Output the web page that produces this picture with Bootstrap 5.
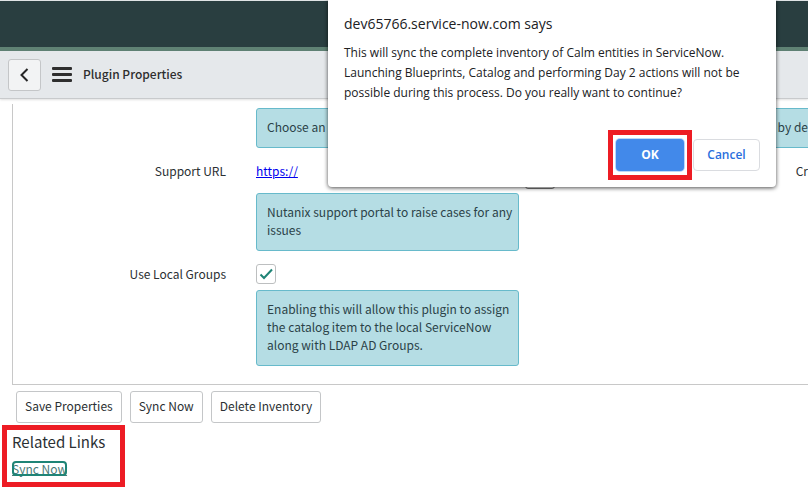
<!DOCTYPE html>
<html lang="en">
<head>
<meta charset="utf-8">
<meta name="viewport" content="width=device-width, initial-scale=1">
<title>Plugin Properties</title>
<link rel="stylesheet" href="https://cdn.jsdelivr.net/npm/bootstrap@5.3.0/dist/css/bootstrap.min.css">
<style>
  body { font-family: "Noto Sans CJK SC", "Open Sans", sans-serif; font-size: 12px; line-height: 18px; color: #2b3033; background: #fff; overflow-x: hidden; }
  .top-banner { height: 51px; background: #293e40; border-top: 1px solid #dfe3e5; border-bottom: 4px solid #5f8274; }
  .page-head { height: 48px; padding-left: 8px; background: #e5e8eb; border-bottom: 1px solid #c8cacc; box-shadow: 0 1px 2px rgba(0,0,0,.12); }
  .page-title { font-size: 12px; line-height: 18px; font-weight: 500; color: #2e2e2e; margin-left: 11px; padding-bottom: 2px; }
  .back-btn { width: 33px; height: 32px; border: 1px solid #c4c6c8; border-radius: 3px; background: #f2f3f4; }
  .menu-btn { margin-left: 11px; }
  .form-panel { margin: 5px 0 0 12px; border-left: 1px solid #c8c8c8; border-bottom: 1px solid #c8c8c8; padding: 4px 0 18px; overflow: hidden; }
  .field-label { width: 213px; text-align: right; flex: none; margin-right: 30px; }
  .field-body { width: 263px; flex: none; }
  .hint { background: #b5dde4; border: 1px solid #67bacb; border-radius: 3px; padding: 9px 0 11px 10px; color: #2b4248; white-space: nowrap; }
  .hint-cut { border-right: 0; border-radius: 3px 0 0 3px; text-align: right; margin-left: 30px; }
  .url-link { color: #00e; text-decoration: underline; }
  .link-row { height: 45px; }
  .lookup-btn { width: 30px; height: 36px; margin-left: 6px; border: 1px solid #777; border-radius: 3px; background: #fff; }
  .check-row { height: 39px; padding-top: 7px; }
  .tick { appearance: none; display: block; width: 20px; height: 20px; margin: 0; border: 1px solid #bdbfc0; border-radius: 3px; background: #fff; }
  .tick-mark { pointer-events: none; }
  .action-row { padding: 6px 0 0 16px; }
  .action-btn { height: 32px; padding: 0 8px 2px; font-size: 12px; line-height: 18px; color: #2b3033; background: #fff; border: 1px solid #c4c6c8; border-radius: 3px; }
  .related { width: max-content; margin: 2px 0 0 2px; padding: 0 15px 6px 5px; border: 5px solid #ed1c24; }
  .related h2 { font-size: 15px; line-height: 24px; font-weight: 400; margin: 0 0 7px; }
  .sync-link { display: block; width: max-content; height: 15px; font-size: 12px; line-height: 15px; color: #4c7a78; border-radius: 4px; outline: 2px solid #1f8476; outline-offset: -2px; text-decoration: underline; }
  .dialog-box { top: 0; left: 328px; width: 448px; padding: 13px 16px 16px; background: #fff; border-radius: 0 0 4px 4px; box-shadow: 0 1px 4px rgba(0,0,0,.7); font-family: "Open Sans", sans-serif; color: #202124; z-index: 10; }
  .dialog-box h1 { font-size: 14px; line-height: 22px; font-weight: 400; margin: 0 0 8px; }
  .dialog-box p { font-size: 12px; line-height: 20px; margin: 0 0 36px; white-space: nowrap; }
  .dialog-actions { gap: 9px; }
  .dlg-btn { height: 32px; border-radius: 4px; font-size: 12px; line-height: 18px; font-weight: 600; padding: 0; }
  .ok-btn { width: 68px; color: #fff; font-weight: 700; background: #4289ea; border: 0; box-shadow: 0 0 0 1px #bcd7fb; }
  .cancel-btn { width: 67px; color: #2a6fdd; background: #fff; border: 1px solid #dadce0; }
  .ok-frame { inset: -9px -8px; border: 5px solid #ed1c24; pointer-events: none; }
</style>
<script src="https://cdn.jsdelivr.net/npm/bootstrap@5.3.0/dist/js/bootstrap.bundle.min.js"></script>
</head>
<body>
<div class="top-banner"></div>
<header class="page-head d-flex align-items-center">
  <button type="button" class="back-btn d-flex align-items-center justify-content-center p-0" aria-label="Back">
    <svg width="10" height="14" viewBox="0 0 10 14" fill="none" stroke="#252525" stroke-width="2"><path d="M7.500 1 1.500 7l6 6"/></svg>
  </button>
  <button type="button" class="menu-btn d-flex border-0 bg-transparent p-0" aria-label="Menu">
    <svg width="20" height="16" viewBox="0 0 20 16" fill="#2e2e2e"><rect width="20" height="3" rx="1"/><rect y="6" width="20" height="3" rx="1"/><rect y="12" width="20" height="3" rx="1"/></svg>
  </button>
  <div class="page-title">Plugin Properties</div>
</header>

<main>
  <section class="form-panel">
    <div class="d-flex">
      <div class="field-label"></div>
      <div class="field-body hint overflow-hidden">Choose an application</div>
      <div class="hint hint-cut flex-grow-1">by de</div>
    </div>
    <div class="d-flex align-items-center link-row">
      <div class="field-label">Support URL</div>
      <div class="field-body"><a href="#" class="url-link">https://</a></div>
      <button type="button" class="lookup-btn p-0" aria-label="Look up"></button>
      <div class="flex-grow-1 text-end">Cr</div>
    </div>
    <div class="d-flex">
      <div class="field-label"></div>
      <div class="field-body hint">Nutanix support portal to raise cases for any<br>issues</div>
    </div>
    <div class="d-flex align-items-center check-row">
      <label class="field-label" for="local-groups">Use Local Groups</label>
      <div class="position-relative">
        <input class="tick" type="checkbox" id="local-groups" checked>
        <svg class="tick-mark position-absolute top-0 start-0" width="20" height="20" viewBox="0 0 20 20" fill="none" stroke="#1f8476" stroke-width="2"><path d="m4.5 10.500 3.500 3.500 8-8.500"/></svg>
      </div>
    </div>
    <div class="d-flex">
      <div class="field-label"></div>
      <div class="field-body hint">Enabling this will allow this plugin to assign<br>the catalog item to the local ServiceNow<br>along with LDAP AD Groups.</div>
    </div>
  </section>
  <div class="d-flex gap-2 action-row">
    <button type="button" class="action-btn">Save Properties</button>
    <button type="button" class="action-btn">Sync Now</button>
    <button type="button" class="action-btn">Delete Inventory</button>
  </div>
  <section class="related">
    <h2>Related Links</h2>
    <a href="#" class="sync-link">Sync Now</a>
  </section>
</main>

<div class="dialog-box position-absolute" role="dialog" aria-labelledby="dialog-title">
  <h1 id="dialog-title">dev65766.service-now.com says</h1>
  <p>This will sync the complete inventory of Calm entities in ServiceNow.<br>Launching Blueprints, Catalog and performing Day 2 actions will not be<br>possible during this process. Do you really want to continue?</p>
  <div class="d-flex justify-content-end dialog-actions">
    <div class="position-relative">
      <button type="button" class="dlg-btn ok-btn">OK</button>
      <div class="ok-frame position-absolute"></div>
    </div>
    <button type="button" class="dlg-btn cancel-btn">Cancel</button>
  </div>
</div>
</body>
</html>
